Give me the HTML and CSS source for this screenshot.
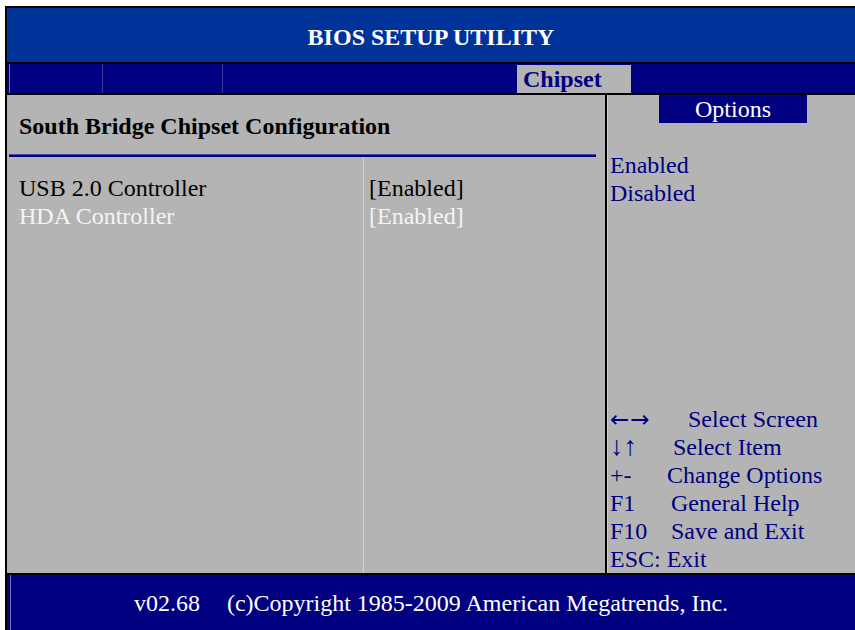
FILE: index.html
```html
<!DOCTYPE html>
<html>
<head>
<meta charset="utf-8">
<link rel="stylesheet" href="styles.css">
</head>
<body>
<div class="frame">
  <header class="title-bar">BIOS SETUP UTILITY</header>
  <nav class="tab-bar">
    <span class="tab tab-first"></span>
    <span class="tab tab-second"></span>
    <span class="tab tab-third"></span>
    <span class="tab tab-active">Chipset</span>
  </nav>
  <main class="main">
    <section class="left-panel">
      <h1 class="section-title">South Bridge Chipset Configuration</h1>
      <div class="title-rule"></div>
      <div class="settings">
        <div class="names">
          <div class="item">USB 2.0 Controller</div>
          <div class="item item-dim">HDA Controller</div>
        </div>
        <div class="values">
          <div class="item">[Enabled]</div>
          <div class="item item-dim">[Enabled]</div>
        </div>
      </div>
    </section>
    <aside class="right-panel">
      <div class="options-head"><span class="options-label">Options</span></div>
      <div class="option-list">
        <div class="line">Enabled</div>
        <div class="line">Disabled</div>
      </div>
      <div class="help">
        <div class="line"><span class="key key-1"><span class="arrows">←→</span></span>Select Screen</div>
        <div class="line"><span class="key key-2"><span class="updown">↓↑</span></span>Select Item</div>
        <div class="line"><span class="key key-3">+-</span>Change Options</div>
        <div class="line"><span class="key key-4">F1</span>General Help</div>
        <div class="line"><span class="key key-4">F10</span>Save and Exit</div>
        <div class="line">ESC: Exit</div>
      </div>
    </aside>
  </main>
  <footer class="footer"><span class="version">v02.68</span>(c)Copyright 1985-2009 American Megatrends, Inc.</footer>
</div>
</body>
</html>
```
FILE: styles.css
```css
* { box-sizing: border-box; margin: 0; padding: 0; }
html, body { background: #ffffff; }
body {
  margin: 0;
  font-family: "Liberation Serif", "Times New Roman", serif;
  font-size: 24px;
  line-height: 28px;
}
.frame {
  margin: 6px 0 0 5px;
  width: 850px;
  height: 624px;
  border-left: 2px solid #000;
  border-top: 2px solid #000;
  display: flex;
  flex-direction: column;
  overflow: hidden;
}
.title-bar {
  height: 56px;
  background: #003399;
  border-bottom: 2px solid #000;
  color: #ffffff;
  font-weight: bold;
  text-align: center;
  padding-top: 15px;
}
.tab-bar {
  height: 31px;
  background: #000080;
  border-bottom: 2px solid #000;
  display: flex;
  padding-left: 2px;
}
.tab { height: 29px; display: block; }
.tab-first { width: 93px; border-left: 1px solid #7474c4; }
.tab-second { width: 120px; border-left: 1px solid #3a3aa0; }
.tab-third { width: 295px; border-left: 1px solid #3a3aa0; }
.tab-active {
  width: 114px;
  height: 28px;
  margin-top: 1px;
  background: #b4b4b4;
  color: #000080;
  font-weight: bold;
  padding-left: 6px;
}
.main {
  height: 480px;
  background: #b4b4b4;
  border-bottom: 2px solid #000;
  display: flex;
}
.left-panel {
  width: 598px;
  display: flex;
  flex-direction: column;
  padding-top: 17px;
}
.section-title {
  font-size: 24px;
  line-height: 28px;
  font-weight: bold;
  color: #000;
  padding-left: 12px;
}
.title-rule {
  margin: 14px 0 0 2px;
  width: 587px;
  height: 3px;
  background: #000080;
  border-top: 1px solid #4a4aa6;
}
.settings {
  flex: 1;
  display: flex;
}
.names {
  width: 357px;
  padding: 17px 0 0 12px;
  border-right: 1px solid #d4d4d4;
}
.values {
  padding: 17px 0 0 5px;
}
.item { color: #000; white-space: nowrap; }
.item-dim { color: #f4f4f4; }
.right-panel {
  width: 250px;
  border-left: 2px solid #000;
  box-shadow: inset 1px 0 0 #d0d0d0;
  display: flex;
  flex-direction: column;
  color: #000080;
  padding-left: 3px;
}
.options-head {
  display: flex;
  padding-left: 49px;
}
.options-label {
  width: 148px;
  height: 28px;
  background: #000080;
  color: #ffffff;
  text-align: center;
}
.option-list {
  margin-top: 28px;
  line-height: 29px;
}
.line { white-space: nowrap; height: 28px; }
.help {
  margin-top: auto;
}
.key { display: inline-block; }
.key-1 { width: 78px; }
.key-2 { width: 63px; }
.key-3 { width: 57px; }
.key-4 { width: 61px; }
.arrows {
  font-family: "DejaVu Sans", sans-serif;
  font-size: 23px;
  letter-spacing: 1px;
  line-height: 0;
}
.updown {
  font-size: 27px;
  line-height: 0;
}
.footer {
  flex: 1;
  background: #000080;
  box-shadow: inset 3px 0 0 #000080, inset 4px 0 0 #7474c4;
  color: #ffffff;
  text-align: center;
  padding-top: 14px;
  white-space: nowrap;
}
.version { margin-right: 27px; }
```
